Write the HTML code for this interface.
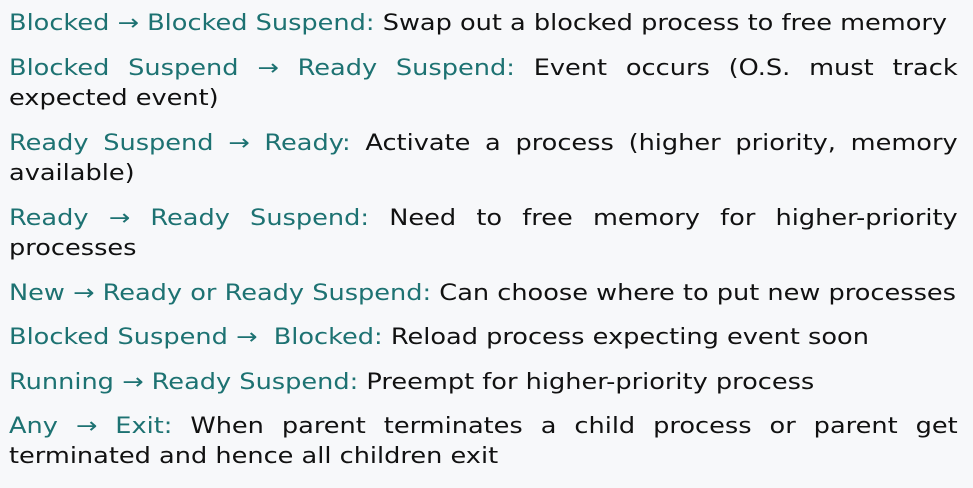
<!DOCTYPE html>
<html><head><meta charset="utf-8"><style>
html,body{margin:0;padding:0;}
body{width:973px;height:488px;background:#f7f8fa;position:relative;overflow:hidden;font-family:"DejaVu Sans","Liberation Sans",sans-serif;font-size:22px;color:#111;}
.p{position:absolute;left:9px;line-height:30px;white-space:nowrap;transform:scaleX(1.164);transform-origin:0 0;}
.j{width:815px;white-space:normal;text-align:justify;text-align-last:left;}
.t{color:#1d7272;}
</style></head><body>
<div class="p" style="top:9px"><span class="t">Blocked → Blocked Suspend:</span> Swap out a blocked process to free memory</div>
<div class="p j" style="top:54px"><span class="t">Blocked Suspend → Ready Suspend:</span> Event occurs (O.S. must track expected event)</div>
<div class="p j" style="top:129px"><span class="t">Ready Suspend → Ready:</span> Activate a process (higher priority, memory available)</div>
<div class="p j" style="top:204px"><span class="t">Ready → Ready Suspend:</span> Need to free memory for higher-priority processes</div>
<div class="p" style="top:279px"><span class="t">New → Ready or Ready Suspend:</span> Can choose where to put new processes</div>
<div class="p" style="top:323px"><span class="t">Blocked Suspend → &nbsp;Blocked:</span> Reload process expecting event soon</div>
<div class="p" style="top:368px"><span class="t">Running → Ready Suspend:</span> Preempt for higher-priority process</div>
<div class="p j" style="top:412px"><span class="t">Any → Exit:</span> When parent terminates a child process or parent get terminated and hence all children exit</div>
</body></html>
